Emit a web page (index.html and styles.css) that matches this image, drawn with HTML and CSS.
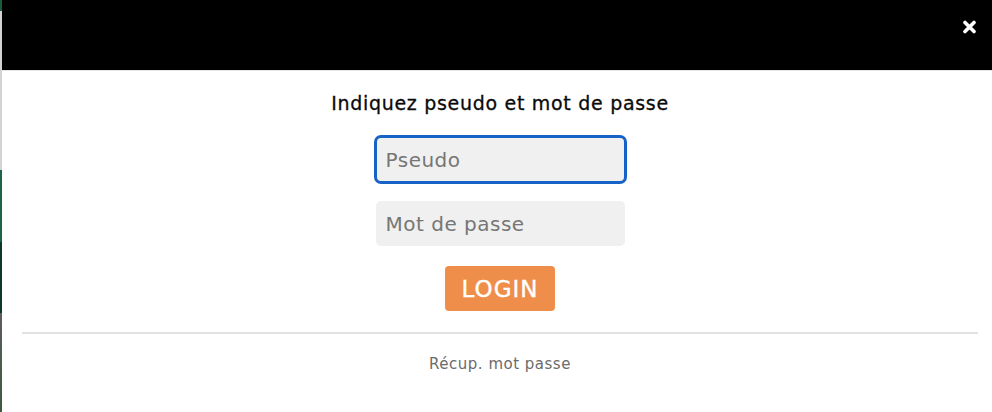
FILE: index.html
```html
<!DOCTYPE html>
<html lang="fr">
<head>
<meta charset="utf-8">
<title>Connexion</title>
<link rel="stylesheet" href="styles.css">
</head>
<body>
<div class="page">
  <div class="backdrop-strip"></div>
  <div class="modal">
    <div class="modal-header">
      <button class="close" type="button" aria-label="Fermer">
        <svg width="13" height="14" viewBox="0 0 13 14" aria-hidden="true">
          <path d="M2 2.5 L11 11.5 M11 2.5 L2 11.5" stroke="#fff" stroke-width="3.6" stroke-linecap="round"/>
        </svg>
      </button>
    </div>
    <div class="modal-body">
      <p class="title">Indiquez pseudo et mot de passe</p>
      <input class="field field-focus" type="text" placeholder="Pseudo">
      <input class="field field-pass" type="password" placeholder="Mot de passe">
      <button class="login" type="button">LOGIN</button>
      <hr class="divider">
      <a class="recover" href="#">Récup. mot passe</a>
    </div>
  </div>
</div>
</body>
</html>
```

FILE: styles.css
```css
html, body {
  margin: 0;
  padding: 0;
  height: 100%;
  overflow: hidden;
  background: #ffffff;
}

.page {
  display: flex;
  height: 412px;
  width: 998px;
  font-family: "DejaVu Sans", "Noto Sans", sans-serif;
}

.backdrop-strip {
  flex: 0 0 2px;
  background: linear-gradient(to bottom,
    #1d5a3c 0, #1d5a3c 11px,
    #d3d3d3 11px, #d3d3d3 170px,
    #1b6446 170px, #1b6446 242px,
    #0c3828 242px, #0c3828 313px,
    #5c5c5c 313px, #3f5a40 412px);
}

.modal {
  flex: 0 0 996px;
  background: #ffffff;
  display: flex;
  flex-direction: column;
}

.modal-header {
  height: 70px;
  background: #000000;
  border-bottom: 1px solid #e6e6e6;
  display: flex;
  justify-content: flex-end;
  align-items: flex-start;
  padding-right: 22px;
}

.close {
  margin-top: 20px;
  padding: 0;
  border: 0;
  background: transparent;
  width: 13px;
  height: 14px;
  display: flex;
  cursor: pointer;
}

.modal-body {
  display: flex;
  flex-direction: column;
  align-items: center;
}

.title {
  margin: 20px 0 0;
  font-size: 19px;
  letter-spacing: 0.7px;
  line-height: 24px;
  color: #0a0a0a;
  -webkit-text-stroke: 0.3px #0a0a0a;
}

.field {
  box-sizing: border-box;
  width: 249px;
  height: 45px;
  border: 0;
  border-radius: 5px;
  background: #f0f0f0;
  padding: 0 10px;
  font-family: "DejaVu Sans", "Noto Sans", sans-serif;
  font-size: 20px;
  letter-spacing: 0.5px;
  color: #333;
}

.field::placeholder {
  color: #767676;
}

.field-focus {
  margin-top: 22px;
  outline: 3px solid #1662c6;
  outline-offset: -1px;
}

.field-pass {
  margin-top: 19px;
}

.login {
  margin-top: 20px;
  width: 110px;
  height: 45px;
  border: 0;
  border-radius: 4px;
  background: #ef8e4a;
  color: #ffffff;
  font-family: "DejaVu Sans", "Noto Sans", sans-serif;
  font-size: 23px;
  letter-spacing: 1px;
  font-weight: 500;
  -webkit-text-stroke: 0.4px #ffffff;
  padding: 0;
  cursor: pointer;
}

.divider {
  align-self: stretch;
  margin: 21px 20px 0;
  border: 0;
  height: 2px;
  background: #e2e2e2;
}

.recover {
  margin-top: 20px;
  font-size: 15px;
  letter-spacing: 0.5px;
  line-height: 20px;
  color: #6b6b6b;
  text-decoration: none;
}
```
